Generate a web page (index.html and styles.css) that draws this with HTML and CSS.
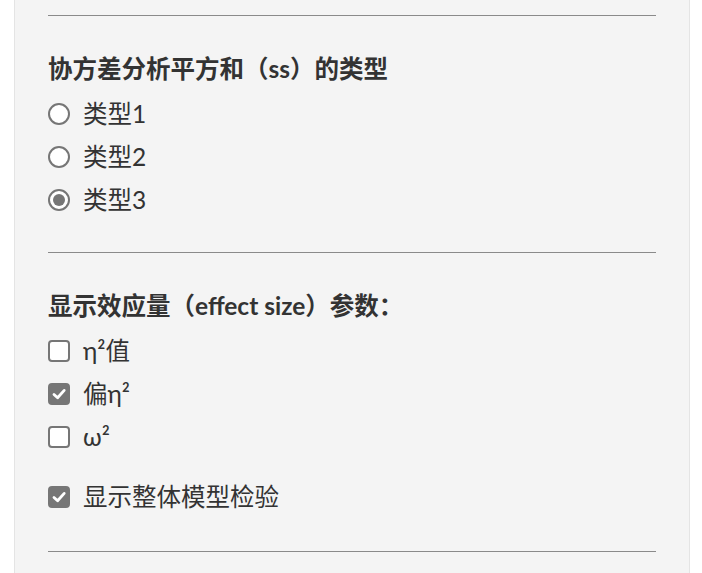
FILE: index.html
```html
<!DOCTYPE html>
<html lang="zh">
<head>
<meta charset="utf-8">
<link rel="stylesheet" href="styles.css">
</head>
<body>
<div class="panel">
  <section class="section">
    <h3 class="heading">协方差分析平方和（ss）的类型</h3>
    <label class="row"><span class="radio"></span><span class="label">类型1</span></label>
    <label class="row"><span class="radio"></span><span class="label">类型2</span></label>
    <label class="row"><span class="radio checked"></span><span class="label">类型3</span></label>
  </section>
  <section class="section second">
    <h3 class="heading">显示效应量（effect size）参数：</h3>
    <label class="row"><span class="box"></span><span class="label">η²值</span></label>
    <label class="row"><span class="box checked"><svg viewBox="0 0 22 22" width="22" height="22"><path d="M6 11.4 L9.6 14.8 L16.2 7.4" fill="none" stroke="#fff" stroke-width="2.8" stroke-linecap="round" stroke-linejoin="round"/></svg></span><span class="label">偏η²</span></label>
    <label class="row"><span class="box"></span><span class="label">ω²</span></label>
    <label class="row extra"><span class="box checked"><svg viewBox="0 0 22 22" width="22" height="22"><path d="M6 11.4 L9.6 14.8 L16.2 7.4" fill="none" stroke="#fff" stroke-width="2.8" stroke-linecap="round" stroke-linejoin="round"/></svg></span><span class="label">显示整体模型检验</span></label>
  </section>
  <div class="rule"></div>
  <div class="tail"></div>
</div>
</body>
</html>
```

FILE: styles.css
```css
html, body {
  margin: 0;
  padding: 0;
  background: #ffffff;
}
body {
  font-family: Lato, "Noto Sans CJK SC", sans-serif;
  color: #333333;
}
.panel {
  margin-left: 14px;
  background: #f4f4f4;
  border-left: 1px solid #e4e4e4;
  border-right: 1px solid #e4e4e4;
  padding: 15px 33px 0 33px;
  box-sizing: content-box;
  width: 608px;
}
.section {
  border-top: 1px solid #8a8a8a;
  padding-top: 37px;
  padding-bottom: 31px;
}
.second {
  padding-bottom: 33px;
}
.heading {
  margin: 0 0 7px 0;
  font-size: 24.5px;
  line-height: 32px;
  font-weight: 700;
  color: #333333;
}
.row {
  display: flex;
  align-items: center;
  height: 43px;
  gap: 13px;
  font-size: 24.5px;
  color: #333333;
}
.extra {
  margin-top: 17px;
}
.label {
  line-height: 30px;
}
.radio {
  width: 22px;
  height: 22px;
  box-sizing: border-box;
  border: 2px solid #767676;
  border-radius: 50%;
  background: #ffffff;
  flex: none;
  display: flex;
  align-items: center;
  justify-content: center;
}
.radio.checked::after {
  content: "";
  width: 12px;
  height: 12px;
  border-radius: 50%;
  background: #767676;
}
.box {
  width: 22px;
  height: 22px;
  box-sizing: border-box;
  border: 2px solid #767676;
  border-radius: 4px;
  background: #ffffff;
  flex: none;
  position: relative;
}
.box.checked {
  background: #767676;
}
.box svg {
  position: absolute;
  left: -2px;
  top: -2px;
}
.rule {
  border-top: 1px solid #8a8a8a;
}
.tail {
  height: 40px;
}
```
